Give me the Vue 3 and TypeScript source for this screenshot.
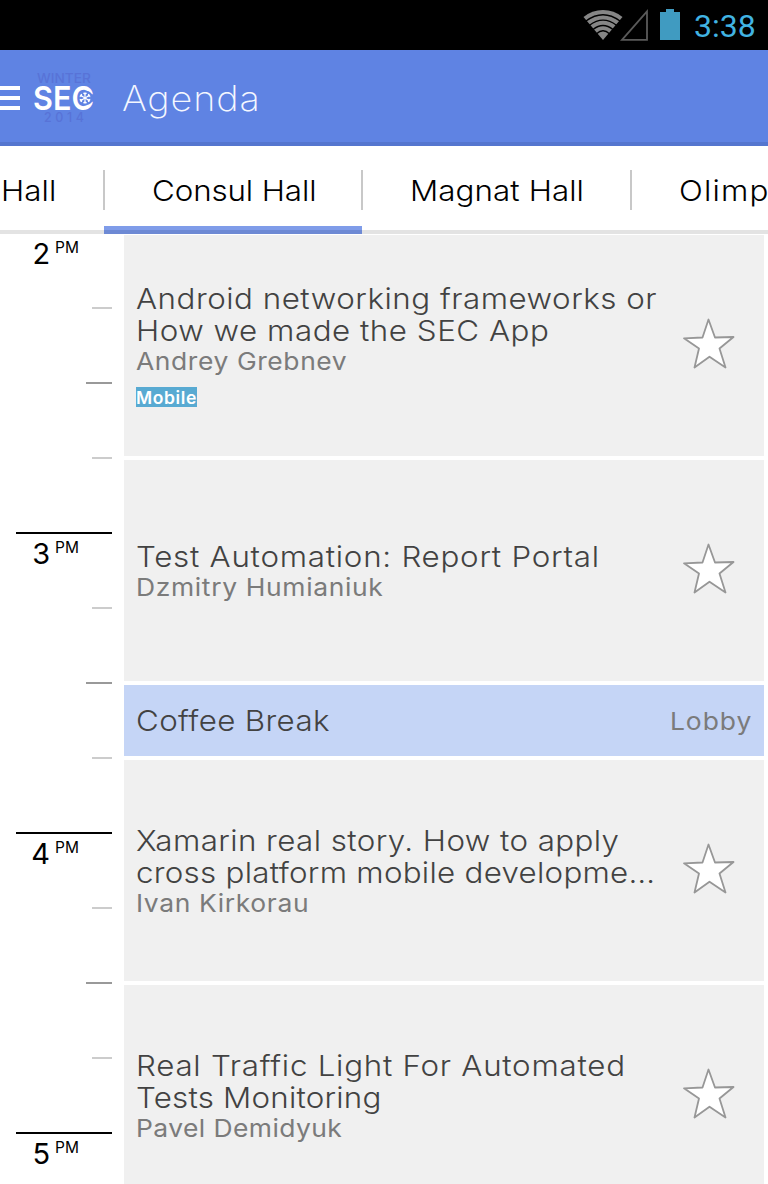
<script setup lang="ts">
interface Line {
  text: string
  tracking: number
}

interface Session {
  id: number
  minutes: number
  title: Line[]
  speaker: Line
  tag?: string
  isBreak?: boolean
}

const halls = [
  { name: 'Hall', kind: 'first', tracking: 0.1 },
  { name: 'Consul Hall', kind: 'active', tracking: -0.1 },
  { name: 'Magnat Hall', kind: 'middle', tracking: 0.08 },
  { name: 'Olimp', kind: 'last', tracking: 1.1 },
]

const hours = [2, 3, 4, 5]

const sessions: Session[] = [
  {
    id: 1,
    minutes: 45,
    title: [
      { text: 'Android networking frameworks or', tracking: 0.47 },
      { text: 'How we made the SEC App', tracking: 0.48 },
    ],
    speaker: { text: 'Andrey Grebnev', tracking: 0.54 },
    tag: 'Mobile',
  },
  {
    id: 2,
    minutes: 45,
    title: [{ text: 'Test Automation: Report Portal', tracking: 0.68 }],
    speaker: { text: 'Dzmitry Humianiuk', tracking: 0.59 },
  },
  {
    id: 3,
    minutes: 15,
    title: [{ text: 'Coffee Break', tracking: 0.32 }],
    speaker: { text: 'Lobby', tracking: 0.9 },
    isBreak: true,
  },
  {
    id: 4,
    minutes: 45,
    title: [
      { text: 'Xamarin real story. How to apply', tracking: 0.38 },
      { text: 'cross platform mobile developme…', tracking: 0.25 },
    ],
    speaker: { text: 'Ivan Kirkorau', tracking: 0.57 },
  },
  {
    id: 5,
    minutes: 45,
    title: [
      { text: 'Real Traffic Light For Automated', tracking: 0.68 },
      { text: 'Tests Monitoring', tracking: 0.2 },
    ],
    speaker: { text: 'Pavel Demidyuk', tracking: 0.38 },
  },
]

const PX_PER_MINUTE = 5
const GAP = 4

const spacing = (value: number) => ({ letterSpacing: `${value}px` })
const cardHeight = (s: Session) => ({ height: `${s.minutes * PX_PER_MINUTE - GAP}px` })
</script>

<template>
  <div class="screen">
    <header class="status">
      <svg class="wifi" width="40" height="32" viewBox="0 0 40 32">
        <path d="M20 31 L0.5 8 Q9 1 20 1 Q31 1 39.500 8 Z" fill="#868686" />
        <g fill="none" stroke="#000" stroke-width="1.400">
          <path d="M3 12 Q20 -0.500 37 12" />
          <path d="M6.500 16.300 Q20 6 33.500 16.300" />
          <path d="M10 20.500 Q20 12.500 30 20.500" />
          <path d="M13.500 24.700 Q20 19 26.500 24.700" />
        </g>
      </svg>
      <svg class="signal" width="28" height="32" viewBox="0 0 28 32">
        <path d="M2 30.800 L27 2.500 V30.800 Z" fill="none" stroke="#5a5a5a" stroke-width="1.800" />
      </svg>
      <svg class="battery" width="20" height="32" viewBox="0 0 20 32">
        <path d="M0 3 H6 V0 H14 V3 H20 V31 H0 Z" fill="#409bc1" />
      </svg>
      <span class="clock">3:38</span>
    </header>

    <div class="bar">
      <div class="burger"><i /><i /><i /></div>
      <svg class="logo" width="68" height="56" viewBox="0 0 68 56">
        <g class="logo-dim">
          <text x="6" y="12.500" font-size="12.500" textLength="54" lengthAdjust="spacingAndGlyphs">WINTER</text>
          <text x="13" y="52" font-size="12.500" textLength="40">2014</text>
        </g>
        <text class="logo-main" x="2" y="40" font-size="33" textLength="61" lengthAdjust="spacingAndGlyphs">SEC</text>
        <circle cx="55" cy="28" r="7.200" fill="#5f83e3" />
        <g stroke="#fff" stroke-width="1.100" fill="none">
          <g v-for="a in [0, 60, 120, 180, 240, 300]" :key="a" :transform="`rotate(${a} 54 28)`">
            <path d="M54 28 V22.200 M52.400 22.800 L54 24.400 L55.600 22.800" />
          </g>
        </g>
      </svg>
      <h1 class="heading">Agenda</h1>
    </div>

    <nav class="tabs">
      <div v-for="hall in halls" :key="hall.name" class="tab" :class="hall.kind">
        <span class="name" :style="spacing(hall.tracking)">{{ hall.name }}</span>
      </div>
    </nav>

    <main class="agenda">
      <div class="ruler">
        <div v-for="hour in hours" :key="hour" class="hour">
          <div class="label">
            <b>{{ hour }}</b><sup>PM</sup>
          </div>
          <i class="tick quarter" />
          <i class="tick half" />
          <i class="tick quarter" />
        </div>
      </div>
      <div class="cards">
        <article
          v-for="s in sessions"
          :key="s.id"
          class="card"
          :class="{ break: s.isBreak }"
          :style="cardHeight(s)"
        >
          <div class="info">
            <div v-for="line in s.title" :key="line.text" class="title" :style="spacing(line.tracking)">
              {{ line.text }}
            </div>
            <div v-if="!s.isBreak" class="speaker" :style="spacing(s.speaker.tracking)">
              {{ s.speaker.text }}
            </div>
            <span v-if="s.tag" class="tag">{{ s.tag }}</span>
          </div>
          <div v-if="s.isBreak" class="speaker place" :style="spacing(s.speaker.tracking)">
            {{ s.speaker.text }}
          </div>
          <svg v-else class="star" width="54" height="54" viewBox="0 0 54 54">
            <path
              d="M26.500 2.500 L33 20.500 L51.500 20 L37.500 31.500 L43.500 50.500 L27.500 39.700 L12.500 50.500 L17 31.500 L2 21.300 L20.500 20.500 Z"
              fill="#fff"
              stroke="#979797"
              stroke-width="1.800"
              stroke-linejoin="round"
            />
          </svg>
        </article>
      </div>
    </main>
  </div>
</template>

<style>
body {
  margin: 0;
  overflow: hidden;
}
</style>

<style scoped>
.screen {
  display: flex;
  flex-direction: column;
  width: 768px;
  height: 1184px;
  overflow: hidden;
  background: #fff;
  font-family: Inter, 'Liberation Sans', sans-serif;
}

.status {
  display: flex;
  flex: none;
  align-items: flex-start;
  box-sizing: border-box;
  height: 50px;
  padding: 9px 12px 0 583px;
  background: #000;
}
.signal { margin-left: -3px; }
.battery { margin-left: 12px; }
.clock {
  margin-left: 14px;
  color: #41b3e2;
  font: 400 32px/34px Roboto, sans-serif;
}

.bar {
  display: flex;
  flex: none;
  align-items: center;
  box-sizing: border-box;
  height: 96px;
  border-bottom: 4px solid #5576cf;
  background: #5f83e3;
}
.burger {
  display: grid;
  gap: 6px;
  width: 20px;
  margin-top: 4px;
}
.burger i {
  height: 4px;
  background: #fff;
}
.logo {
  margin: 4px 0 0 11px;
  font-family: Inter, sans-serif;
}
.logo-dim {
  fill: #5873d7;
  font-weight: 500;
}
.logo-main {
  fill: #fff;
  font-weight: 600;
}
.heading {
  margin: 3px 0 0 23px;
  color: #f4f7ff;
  font-size: 35px;
  font-weight: 250;
  line-height: 44px;
  letter-spacing: 0.8px;
  transform: scaleX(1.08);
  transform-origin: left;
}

.tabs {
  position: relative;
  z-index: 1;
  display: flex;
  flex: none;
  box-sizing: border-box;
  height: 88px;
  background: linear-gradient(#fff 84px, #e3e3e3 84px);
  color: #000;
  font-size: 29px;
  font-weight: 300;
}
.tab {
  display: flex;
  flex: none;
  justify-content: space-between;
  box-sizing: border-box;
  height: 88px;
  padding: 24px 0 24px 48px;
  line-height: 42px;
  white-space: nowrap;
}
.tab::after {
  width: 2px;
  margin-right: -1px;
  background: #c8c8c8;
  content: '';
}
.name {
  transform: scaleX(1.08);
  transform-origin: left;
}
.first { width: 104px; padding-left: 1px; }
.active {
  width: 258px;
  background: linear-gradient(transparent 80px, #7f9ce9 80px 84px, #6d89d4 84px);
}
.middle { width: 269px; }
.last { width: 160px; }

.agenda {
  display: flex;
  flex: 1;
  min-height: 0;
  margin-top: -2px;
}

.ruler {
  flex: none;
  width: 124px;
}
.hour {
  display: grid;
  grid-template-rows: repeat(4, 75px);
  box-sizing: border-box;
  width: 112px;
}
.label {
  display: flex;
  align-items: flex-start;
  justify-content: flex-end;
  box-sizing: border-box;
  margin-left: 16px;
  padding-right: 33px;
  border-top: 2px solid #000;
  color: #000;
}
.label b {
  font-size: 29px;
  font-weight: 400;
  line-height: 39px;
}
.label sup {
  margin-left: 5px;
  font-size: 15.500px;
  line-height: 28px;
  vertical-align: baseline;
}
.tick {
  justify-self: end;
  height: 2px;
}
.quarter { width: 20px; background: #ccc; }
.half { width: 26px; background: #999; }

.cards {
  display: flex;
  flex: 1;
  flex-direction: column;
  gap: 4px;
  padding: 3px 4px 0 0;
}
.card {
  display: flex;
  flex: none;
  align-items: center;
  justify-content: space-between;
  box-sizing: border-box;
  padding: 0 12px;
  background: #f0f0f0;
}
.break { background: #c5d5f6; }
.info { padding-top: 2px; }
.break .info { padding-top: 0; }
.title {
  color: #424242;
  font-size: 29px;
  font-weight: 300;
  line-height: 32px;
  white-space: nowrap;
  transform: scaleX(1.08);
  transform-origin: left;
}
.speaker {
  height: 30px;
  color: #7b7b7b;
  font-size: 24.500px;
  line-height: 29px;
  white-space: nowrap;
  transform: scaleX(1.08);
  transform-origin: left;
}
.place {
  line-height: 30px;
  transform-origin: right;
}
.tag {
  display: block;
  width: 61px;
  height: 20px;
  margin: 10px 0 4px;
  background: #58aad2;
  color: #fff;
  font-size: 17.500px;
  font-weight: 600;
  line-height: 22px;
  letter-spacing: 0.6px;
}
.star { flex: none; margin: -4px 16px 0 0; }
</style>
